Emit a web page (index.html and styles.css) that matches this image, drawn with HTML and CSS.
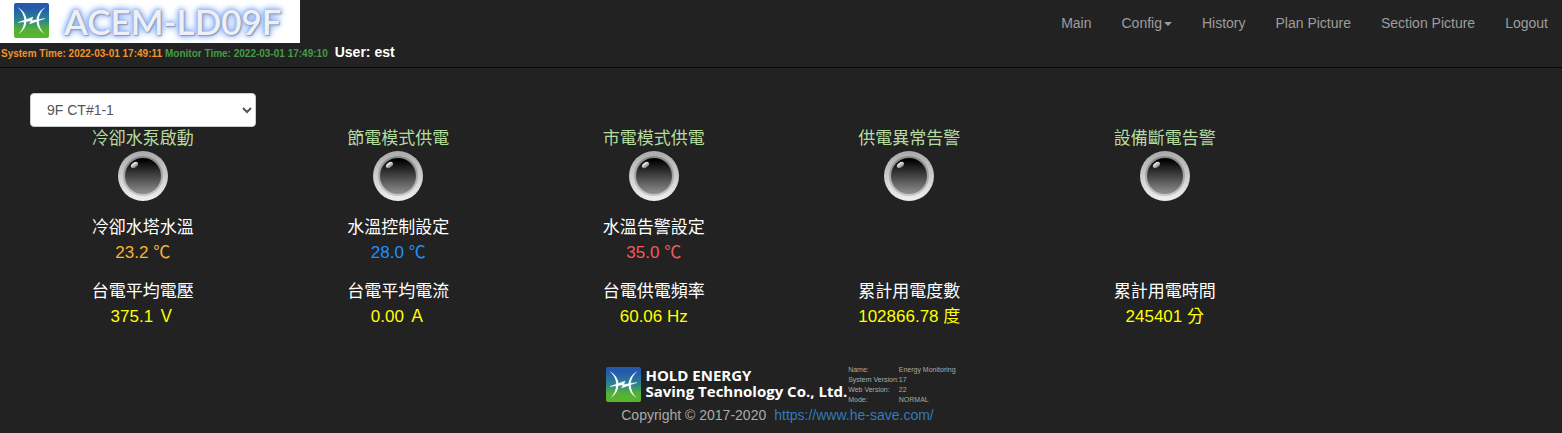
FILE: index.html
```html
<!DOCTYPE html>
<html lang="zh-Hant">
<head>
<meta charset="utf-8">
<title>ACEM-LD09F</title>
<link rel="stylesheet" href="styles.css">
</head>
<body>
<svg class="defs" aria-hidden="true">
  <defs>
    <linearGradient id="badge" x1="0" y1="0" x2="0" y2="1">
      <stop offset="0.15" stop-color="#2559ad"/><stop offset="0.5" stop-color="#2b868c"/><stop offset="0.75" stop-color="#52b135"/><stop offset="1" stop-color="#5ab52c"/>
    </linearGradient>
    <linearGradient id="rim" x1="0" y1="0" x2="0" y2="1">
      <stop offset="0" stop-color="#aaa"/><stop offset="1" stop-color="#f0f0f0"/>
    </linearGradient>
    <linearGradient id="groove" x1="0" y1="0" x2="0" y2="1">
      <stop offset="0" stop-color="#858585"/><stop offset="1" stop-color="#c8c8c8"/>
    </linearGradient>
    <linearGradient id="lens" x1="0" y1="0" x2="0" y2="1">
      <stop offset="0.05" stop-color="#000"/><stop offset="1" stop-color="#909090"/>
    </linearGradient>
    <linearGradient id="shine" x1="0" y1="0" x2="0" y2="1">
      <stop offset="0" stop-color="#fff"/><stop offset="1" stop-color="#777"/>
    </linearGradient>
    <symbol id="emblem" viewBox="0 0 35 35">
      <rect width="35" height="35" rx="2" fill="url(#badge)"/>
      <path d="M4 4.500Q12 9 12.500 17.500Q12 26 5 30.500Q10 25.500 10.400 17.500Q10 9.500 4 4.500ZM31 4.500Q23 9 22.500 17.500Q23 26 30 30.500Q25 25.500 24.600 17.500Q25 9.500 31 4.500Z" fill="#fff" stroke="#fff" stroke-width=".2"/>
      <path d="M4 19.500L19 14L17.800 17.500L31 15.500L15.500 21L17 18Z" fill="#fff" stroke="#fff" stroke-width=".4"/>
    </symbol>
    <symbol id="lamp" viewBox="0 0 50 50">
      <circle cx="25" cy="25" r="25" fill="url(#rim)"/>
      <circle cx="25" cy="25" r="20" fill="url(#groove)"/>
      <circle cx="25" cy="25" r="18" fill="url(#lens)"/>
      <ellipse cx="16.500" cy="14" rx="4" ry="2.500" transform="rotate(-35 16.500 14)" fill="url(#shine)"/>
    </symbol>
  </defs>
</svg>
<header class="topbar">
  <div class="identity">
    <div class="brand"><svg class="emblem"><use href="#emblem"/></svg><span class="brand-name">ACEM-LD09F</span></div>
    <div class="status"><span class="system-time">System Time: 2022-03-01 17:49:11</span><span class="monitor-time">Monitor Time: 2022-03-01 17:49:10</span><span class="user">User: est</span></div>
  </div>
  <nav class="menu">
    <a href="#">Main</a><a href="#">Config<span class="caret"></span></a><a href="#">History</a><a href="#">Plan Picture</a><a href="#">Section Picture</a><a href="#">Logout</a>
  </nav>
</header>
<main class="content">
  <select class="unit-select" aria-label="Unit"><option>9F CT#1-1</option></select>
  <section class="grid">
    <div class="cell"><span class="lamp-label">冷卻水泵啟動</span><svg class="lamp"><use href="#lamp"/></svg></div>
    <div class="cell"><span class="lamp-label">節電模式供電</span><svg class="lamp"><use href="#lamp"/></svg></div>
    <div class="cell"><span class="lamp-label">市電模式供電</span><svg class="lamp"><use href="#lamp"/></svg></div>
    <div class="cell"><span class="lamp-label">供電異常告警</span><svg class="lamp"><use href="#lamp"/></svg></div>
    <div class="cell"><span class="lamp-label">設備斷電告警</span><svg class="lamp"><use href="#lamp"/></svg></div>
  </section>
  <section class="grid">
    <div class="cell"><span>冷卻水塔水溫</span><span class="orange">23.2 ℃</span></div>
    <div class="cell"><span>水溫控制設定</span><span class="blue">28.0 ℃</span></div>
    <div class="cell"><span>水溫告警設定</span><span class="red">35.0 ℃</span></div>
  </section>
  <section class="grid">
    <div class="cell"><span>台電平均電壓</span><span class="yellow">375.1 Ｖ</span></div>
    <div class="cell"><span>台電平均電流</span><span class="yellow">0.00 Ａ</span></div>
    <div class="cell"><span>台電供電頻率</span><span class="yellow">60.06 Hz</span></div>
    <div class="cell"><span>累計用電度數</span><span class="yellow">102866.78 度</span></div>
    <div class="cell"><span>累計用電時間</span><span class="yellow">245401 分</span></div>
  </section>
</main>
<footer class="footer">
  <div class="company">
    <svg class="emblem"><use href="#emblem"/></svg>
    <div class="company-name">HOLD ENERGY<br>Saving Technology Co., Ltd.</div>
    <table class="versions">
      <tr><th scope="row">Name:</th><td>Energy Monitoring</td></tr>
      <tr><th scope="row">System Version:</th><td>17</td></tr>
      <tr><th scope="row">Web Version:</th><td>22</td></tr>
      <tr><th scope="row">Mode:</th><td>NORMAL</td></tr>
    </table>
  </div>
  <div class="copyright"><span>Copyright © 2017-2020</span><a href="#">https://www.he-save.com/</a></div>
</footer>
</body>
</html>
```
FILE: styles.css
```css
* { box-sizing: border-box; }
body {
  margin: 0;
  background: #222;
  color: #fff;
  font: 14px/20px "Liberation Sans", "Noto Sans CJK TC", sans-serif;
}
a { text-decoration: none; }
.defs { position: absolute; width: 0; height: 0; }
.emblem { display: block; flex: none; width: 35px; height: 35px; }

.topbar {
  display: flex;
  justify-content: space-between;
  align-items: flex-start;
  border-bottom: 1px solid #080808;
}
.brand {
  display: flex;
  align-items: center;
  gap: 15px;
  width: 300px;
  height: 43px;
  padding: 0 0 2px 14px;
  background: #fff;
}
.brand-name {
  color: #eef0f6;
  font: 600 35px/42px Lato, sans-serif;
  text-shadow: 1px 1px 1px #8d97b0, 0 0 3px #8fb2f5, 0 0 5px #8fb2f5, 0 0 7px #8fb2f5, 0 0 9px #a4c2fa;
}
.status {
  display: flex;
  align-items: baseline;
  gap: 3px;
  height: 24px;
  padding-left: 1px;
  font-size: 10px;
  font-weight: bold;
}
.system-time { color: #f0932b; }
.monitor-time { color: #449d44; }
.user { padding-left: 4px; font-size: 14px; line-height: 18px; }
.menu { display: flex; }
.menu a { padding: 13px 15px; color: #9d9d9d; }
.menu a:last-child { padding-right: 14px; }
.caret {
  display: inline-block;
  margin-left: 2px;
  border: 4px solid transparent;
  border-top-color: currentColor;
  border-bottom: 0;
  vertical-align: middle;
}

.content { padding: 25px 14px 0 15px; font-size: 17px; line-height: 25px; }
.unit-select {
  display: block;
  width: 226px;
  height: 34px;
  margin-left: 15px;
  padding: 6px 12px;
  border: 1px solid #ccc;
  border-radius: 4px;
  background: #fff;
  color: #555;
  font: 14px/20px "Liberation Sans", sans-serif;
}
.grid { display: grid; grid-template-columns: repeat(6, 1fr); margin-bottom: 14px; }
.cell { display: flex; flex-direction: column; align-items: center; }
.lamp { width: 50px; height: 50px; }
.lamp-label { color: #b5dca0; line-height: 24px; }
.orange { color: #f9b232; }
.blue { color: #1e90ff; }
.red { color: #f35b5b; }
.yellow { color: #ff0; }

.footer { padding-top: 22px; color: #aaa; }
.company { display: flex; justify-content: center; }
.company .emblem { margin: 2px 4px 0 0; }
.company-name { padding: 2px 1px 0 0; color: #fff; font: bold 15px/16px "Open Sans", sans-serif; }
.versions { width: 107px; border-collapse: collapse; font-size: 7px; line-height: 10px; white-space: nowrap; }
.versions th { width: 50px; padding: 0; font-weight: normal; text-align: left; }
.versions td { padding: 0; }
.copyright { display: flex; justify-content: center; gap: 8px; padding-right: 7px; }
.copyright a { color: #337ab7; }
```
